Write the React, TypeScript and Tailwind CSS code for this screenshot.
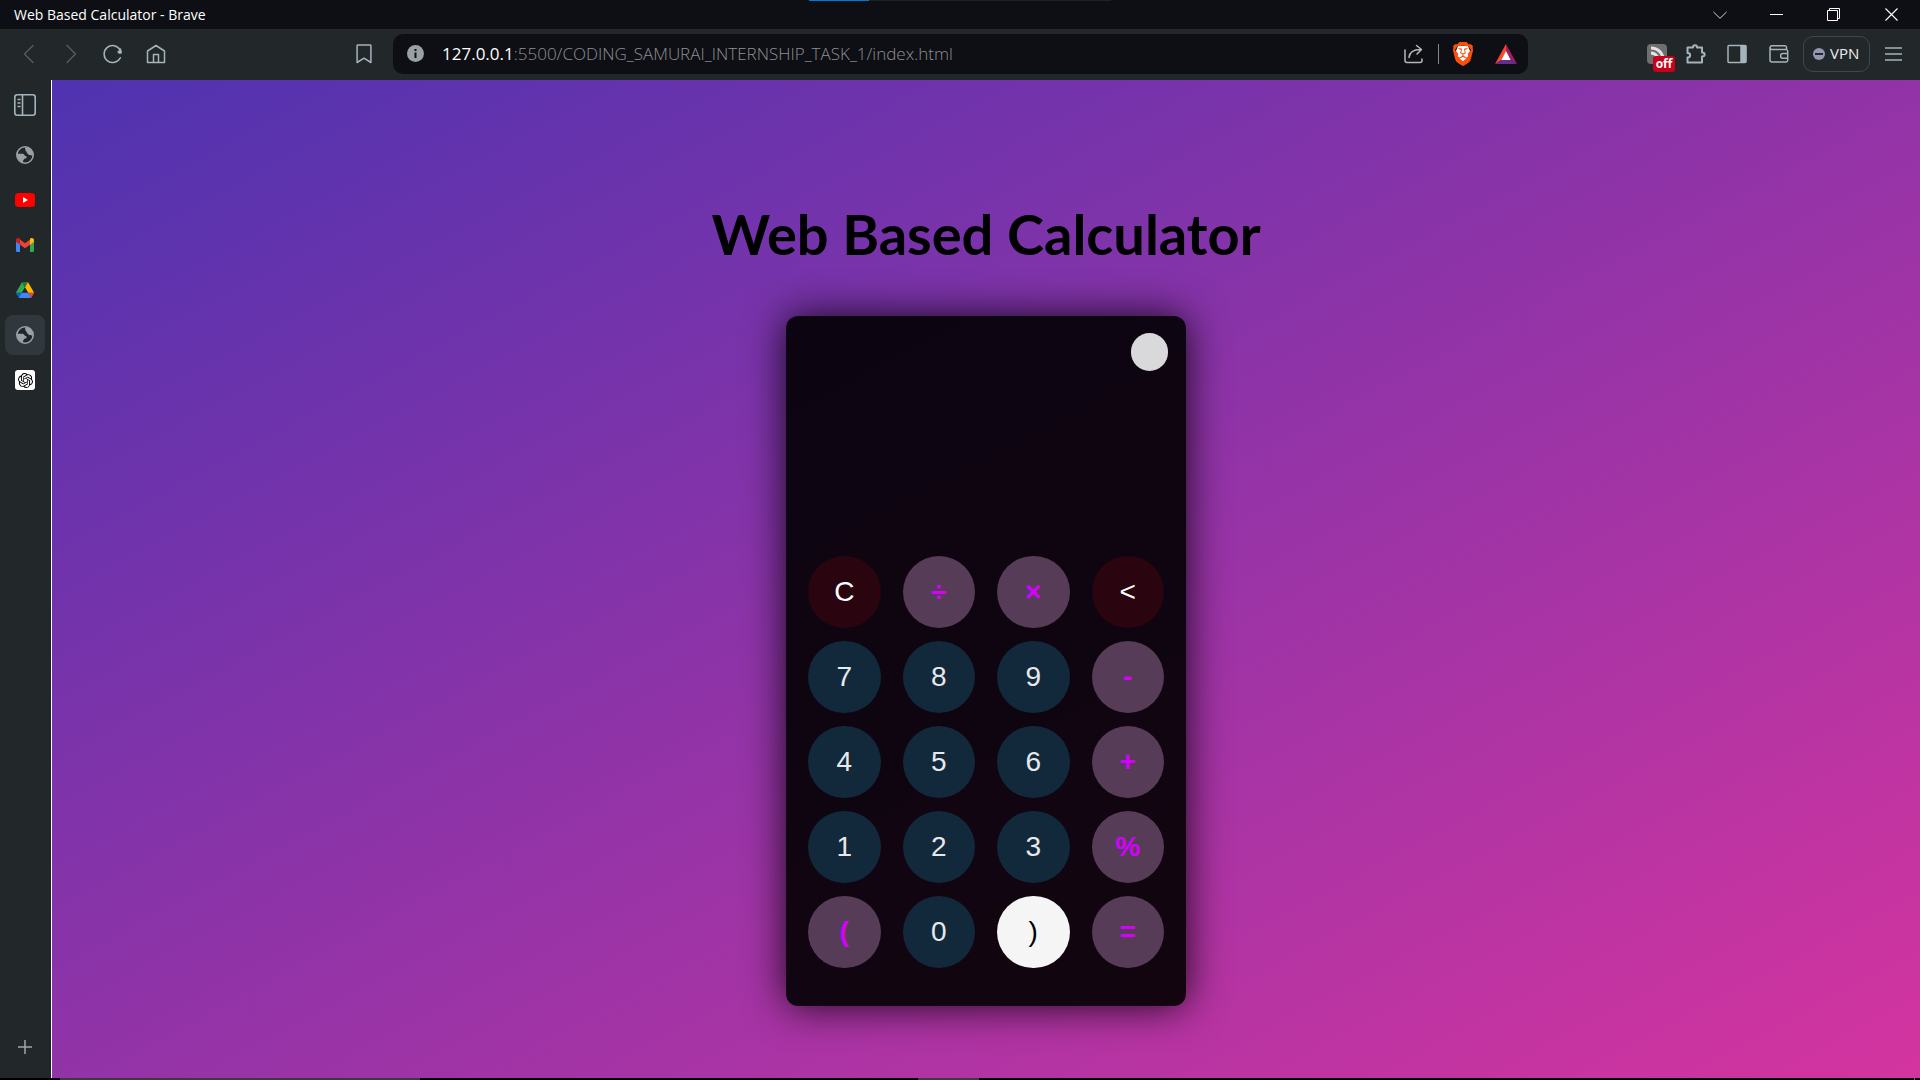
import type { ReactNode } from 'react';
import { SiBrave, SiOpenai } from 'react-icons/si';

type KeyKind = 'digit' | 'operator' | 'danger' | 'active';

const keyStyles: Record<KeyKind, string> = {
  digit: 'bg-[#12293c] text-[#e8e8ea]',
  operator: 'bg-[#573c58] font-bold text-[#d500ff]',
  danger: 'bg-[#2a050f] text-white',
  active: 'bg-[#f5f5f5] text-black',
};

const keys: { label: string; kind: KeyKind }[] = [
  { label: 'C', kind: 'danger' },
  { label: '÷', kind: 'operator' },
  { label: '×', kind: 'operator' },
  { label: '<', kind: 'danger' },
  { label: '7', kind: 'digit' },
  { label: '8', kind: 'digit' },
  { label: '9', kind: 'digit' },
  { label: '-', kind: 'operator' },
  { label: '4', kind: 'digit' },
  { label: '5', kind: 'digit' },
  { label: '6', kind: 'digit' },
  { label: '+', kind: 'operator' },
  { label: '1', kind: 'digit' },
  { label: '2', kind: 'digit' },
  { label: '3', kind: 'digit' },
  { label: '%', kind: 'operator' },
  { label: '(', kind: 'operator' },
  { label: '0', kind: 'digit' },
  { label: ')', kind: 'active' },
  { label: '=', kind: 'operator' },
];

function Stroke({ children, size = 20, width = 1.5 }: { children: ReactNode; size?: number; width?: number }) {
  return (
    <svg
      width={size}
      height={size}
      viewBox="0 0 20 20"
      fill="none"
      stroke="currentColor"
      strokeWidth={width}
      strokeLinecap="round"
      strokeLinejoin="round"
    >
      {children}
    </svg>
  );
}

function IconButton({ label, className = '', children }: { label: string; className?: string; children: ReactNode }) {
  return (
    <button type="button" aria-label={label} className={`flex shrink-0 items-center justify-center ${className}`}>
      {children}
    </button>
  );
}

function Globe() {
  return (
    <svg width="18" height="18" viewBox="0 0 18 18">
      <circle cx="9" cy="9" r="8.2" fill="#20272b" stroke="#9aa0a6" strokeWidth="1.6" />
      <path
        d="M9.400 1.200C8.600 2 9 2.800 9.700 3.300c-.8.700-.4 1.600.4 2 .9.400.5 1.500 1.300 2.100.9.600 1.300 1.700 2.500 1.700 1.100 0 1.900.8 3.100.5C17.300 4.800 13.800.9 9.400 1.200Z"
        fill="#9aa0a6"
      />
      <path
        d="M1 7.800h5c1.100 0 2.100.5 2.500 1.400.4.800 1.900.4 2.100 1.500.2 1.200-.7 1.900-1.600 1.900-1 0-.8 1-1.500 1.500-.6.400-.5 1.600-.2 2.500C3.600 15.800.8 12.700 1 7.800Z"
        fill="#9aa0a6"
      />
    </svg>
  );
}

function YouTube() {
  return (
    <svg width="20" height="14" viewBox="0 0 20 14">
      <rect width="20" height="14" rx="3.500" fill="#f00" />
      <path d="M8 4l5 3-5 3Z" fill="#fff" />
    </svg>
  );
}

function Gmail() {
  return (
    <svg width="18" height="14" viewBox="0 0 18 14">
      <path d="M0 3.500h4V14H1.300A1.300 1.300 0 0 1 0 12.700Z" fill="#4285f4" />
      <path d="M14 3.500h4v9.200a1.300 1.300 0 0 1-1.300 1.300H14Z" fill="#34a853" />
      <path d="M4 1.500 9 5.200l5-3.700v5.200L9 10.300 4 6.700Z" fill="#ea4335" />
      <path d="M0 2.200C0 .2 2.200-.6 3.600.5L4 .9v5.800L0 3.800Z" fill="#c5221f" />
      <path d="M18 2.200c0-2-2.200-2.800-3.600-1.700l-.4.4v5.800l4-2.900Z" fill="#fbbc04" />
    </svg>
  );
}

function Drive() {
  return (
    <svg width="18" height="16" viewBox="0 0 87.300 78">
      <path d="m6.600 66.850 3.850 6.650c.8 1.400 1.950 2.500 3.300 3.300l13.750-23.800h-27.500c0 1.550.4 3.100 1.200 4.500z" fill="#0066da" />
      <path d="m43.650 25-13.750-23.800c-1.350.8-2.500 1.900-3.300 3.300l-25.400 44a9.060 9.060 0 0 0-1.200 4.500h27.500z" fill="#34a853" />
      <path d="m73.550 76.800c1.350-.8 2.500-1.900 3.300-3.300l1.600-2.750 7.650-13.250c.8-1.400 1.200-2.950 1.200-4.500h-27.502l5.852 11.500z" fill="#ea4335" />
      <path d="m43.650 25 13.750-23.800c-1.350-.8-2.900-1.200-4.500-1.200h-18.500c-1.600 0-3.150.45-4.500 1.200z" fill="#188038" />
      <path d="m59.800 53h-32.300l-13.750 23.800c1.350.8 2.900 1.200 4.500 1.200h50.800c1.600 0 3.150-.45 4.500-1.200z" fill="#4285f4" />
      <path d="m73.400 26.500-12.700-22c-.8-1.400-1.950-2.500-3.300-3.300l-13.750 23.800 16.150 28h27.450c0-1.550-.4-3.100-1.200-4.500z" fill="#ffba00" />
    </svg>
  );
}

function Bat() {
  return (
    <svg width="22" height="20" viewBox="0 0 22 20">
      <path d="M11 0 0 20l6.500-4L11 7.500Z" fill="#ff4724" />
      <path d="M11 0l11 20-6.500-4L11 7.500Z" fill="#9e1f63" />
      <path d="M0 20h22l-6.500-4h-9Z" fill="#662d91" />
      <path d="M11 7 6.300 16h9.400Z" fill="#fff" />
    </svg>
  );
}

function TitleBar() {
  return (
    <header className="grid h-[29px] grid-cols-[1fr_302px_1fr] bg-[#0e0f14] text-white">
      <h2 className="self-center pl-[14px] text-[14px] leading-5">Web Based Calculator - Brave</h2>
      <div className="h-px bg-[#202122]">
        <div className="h-px w-[60px] bg-[#0078d7]" />
      </div>
      <div className="flex items-center justify-end">
        <IconButton label="Search tabs" className="h-7 w-[57px]">
          <svg width="14" height="8" viewBox="0 0 14 8" fill="none" stroke="#d0d0d2">
            <path d="M.5 1 7 7.300 13.500 1" />
          </svg>
        </IconButton>
        <IconButton label="Minimize" className="h-7 w-[57px]">
          <svg width="13" height="13" viewBox="0 0 13 13" stroke="currentColor">
            <path d="M0 6.500h13" />
          </svg>
        </IconButton>
        <IconButton label="Restore" className="h-7 w-[57px]">
          <svg width="13" height="13" viewBox="0 0 13 13" fill="none" stroke="currentColor">
            <path d="M.5 2.500h10v10H.5ZM2.500 2.500v-2h10v10h-2" />
          </svg>
        </IconButton>
        <IconButton label="Close" className="h-7 w-[58px]">
          <svg width="13" height="13" viewBox="0 0 13 13" stroke="currentColor" strokeWidth="1.100">
            <path d="M.5.5l12 12M12.500.5l-12 12" />
          </svg>
        </IconButton>
      </div>
    </header>
  );
}

function Toolbar() {
  return (
    <nav className="flex h-[51px] items-center bg-[#22272a] pb-0.5 text-[#a5b4bb]">
      <div className="flex w-[393px] items-center pr-[19px] pl-[7px]">
        <IconButton label="Back" className="h-9 w-[43px] text-[#545b5f]">
          <Stroke><path d="M14 1.500 5.500 10l8.500 8.500" /></Stroke>
        </IconButton>
        <IconButton label="Forward" className="h-9 w-[42px] text-[#545b5f]">
          <Stroke><path d="M6 1.500l8.500 8.500L6 18.500" /></Stroke>
        </IconButton>
        <IconButton label="Reload" className="h-9 w-[42px]">
          <Stroke>
            <path d="M17.300 13.700A8.500 8.500 0 1 1 17 5.800" />
            <circle cx="17" cy="8" r="2" fill="currentColor" stroke="none" />
            <path d="M17.500 5v3h-2.500" />
          </Stroke>
        </IconButton>
        <IconButton label="Home" className="h-9 w-[43px]">
          <Stroke>
            <path d="M1.500 7 10 1.500 18.500 7v11.500h-17Z M7.500 18.500v-8h5v8" />
          </Stroke>
        </IconButton>
        <IconButton label="Bookmark this page" className="ml-auto h-9 w-5">
          <Stroke><path d="M3.800 1h12.400a.7.7 0 0 1 .7.7V18.500L10 14.200l-6.900 4.300V1.700a.7.7 0 0 1 .7-.7Z" /></Stroke>
        </IconButton>
      </div>

      <div className="flex h-10 min-w-0 flex-1 items-center rounded-[10px] bg-[#0e0f14] pr-[11px] pl-[14px]">
        <IconButton label="Site information" className="h-8 w-[17px]">
          <svg width="17" height="17" viewBox="0 0 17 17">
            <circle cx="8.500" cy="8.500" r="8.500" fill="#9aa0a6" />
            <path d="M7.500 4h2v2h-2ZM7.500 7.500h2V13h-2Z" fill="#0e0f14" />
          </svg>
        </IconButton>
        <a href="#address" className="ml-[18px] min-w-0 flex-1 truncate text-[17px] leading-6 font-light text-[#8e8f92]">
          <span className="font-normal text-white">127.0.0.1</span>
          :5500/CODING_SAMURAI_INTERNSHIP_TASK_1/index.html
        </a>
        <IconButton label="Share this page" className="h-8 w-5 text-[#b5b6b8]">
          <Stroke>
            <path d="M1 6v10.500a2 2 0 0 0 2 2h13a2 2 0 0 0 2-2V15M5 13.500c.5-5 4-8 11.500-8M12.500 1.500l5 4-4.500 4.500" />
          </Stroke>
        </IconButton>
        <span className="mx-[14px] h-5 w-px bg-[#85868a]" />
        <IconButton label="Brave Shields" className="h-8 w-5">
          <svg width="20" height="24" viewBox="0 0 20 24">
            <path d="M5 4h10l2 5-2 7-5 4-5-4-2-7Z" fill="#fff" />
            <SiBrave x="-2" y="0" size={24} color="#fb4f0a" />
          </svg>
        </IconButton>
        <IconButton label="Brave Rewards" className="ml-[22px] h-8 w-[22px]"><Bat /></IconButton>
      </div>

      <div className="flex w-[392px] items-center justify-end pr-[18px]">
        <IconButton label="Feed extension, off" className="relative h-5 w-5">
          <svg width="20" height="20" viewBox="0 0 20 20">
            <rect width="20" height="20" rx="4" fill="#6f6f6f" />
            <path d="M4 4c7 0 12 5 12 12M4 9c4 0 7 3 7 7" fill="none" stroke="#e4e4e4" strokeWidth="3" />
          </svg>
          <span className="absolute top-3 left-[6px] h-4 w-[22px] rounded-[3px] bg-[#c8001a] text-center text-[12px] leading-4 font-bold text-white">
            off
          </span>
        </IconButton>
        <IconButton label="Extensions" className="ml-[19px] h-8 w-5">
          <Stroke width={2}>
            <path d="M1.500 3.500H7c0-3 4-3 4 0h5v5c3.500 0 3.500 4 0 4v6h-14.500v-5c3.500 0 3.500-4.500 0-4.500Z" />
          </Stroke>
        </IconButton>
        <IconButton label="Show sidebar" className="ml-[21px] h-8 w-5">
          <Stroke>
            <rect x="1" y="1.500" width="18" height="17" rx="1" />
            <path d="M14 2h4.500v16H14Z" fill="currentColor" />
          </Stroke>
        </IconButton>
        <IconButton label="Wallet" className="ml-[22px] h-8 w-5">
          <Stroke>
            <path d="M17.500 5.500V3.300a1.500 1.500 0 0 0-1.500-1.500H3a2 2 0 0 0-2 2V16a2 2 0 0 0 2 2h14a1.700 1.700 0 0 0 1.700-1.700V7.200A1.700 1.700 0 0 0 17 5.500H3a2 2 0 0 1-2-1.700M18.700 9.500h-5a2 2 0 0 0-2 2v.8a2 2 0 0 0 2 2h5" />
          </Stroke>
        </IconButton>
        <button
          type="button"
          className="ml-[14px] flex h-9 w-[67px] items-center gap-[5px] rounded-[10px] border border-[#3d484d] pl-[9px] text-[15px] text-[#ececf0]"
        >
          <span className="flex h-3 w-3 items-center justify-center rounded-full bg-[#9696b0]">
            <span className="h-0.5 w-2 bg-[#22272a]" />
          </span>
          VPN
        </button>
        <IconButton label="Menu" className="ml-[14px] h-8 w-[18px]">
          <svg width="17" height="14" viewBox="0 0 17 14" stroke="currentColor" strokeWidth="1.300">
            <path d="M0 1h17M0 7h17M0 13h17" />
          </svg>
        </IconButton>
      </div>
    </nav>
  );
}

function Sidebar() {
  return (
    <aside className="flex w-[51px] shrink-0 flex-col items-center gap-[5px] border-r border-[#1a2023] bg-[#22272a] pt-[5px]">
      <IconButton label="Collapse sidebar" className="mb-[5px] h-10 w-10 text-[#a5b4bb]">
        <svg width="22" height="22" viewBox="0 0 22 22" fill="none" stroke="currentColor" strokeWidth="1.600">
          <rect x=".8" y=".8" width="20.400" height="20.400" rx="2.500" />
          <path d="M8.500 1v20M3.500 5.500h3M3.500 9h3M3.500 12.500h3" />
        </svg>
      </IconButton>
      <IconButton label="Web page" className="h-10 w-10"><Globe /></IconButton>
      <IconButton label="YouTube" className="h-10 w-10"><YouTube /></IconButton>
      <IconButton label="Gmail" className="h-10 w-10"><Gmail /></IconButton>
      <IconButton label="Google Drive" className="h-10 w-10"><Drive /></IconButton>
      <IconButton label="Web Based Calculator" className="h-10 w-10 rounded-lg bg-[#30383d]"><Globe /></IconButton>
      <IconButton label="ChatGPT" className="h-10 w-10">
        <span className="flex h-5 w-5 items-center justify-center rounded-[3px] bg-white text-black">
          <SiOpenai size={15} />
        </span>
      </IconButton>
      <IconButton label="New tab" className="mt-auto mb-[11px] h-10 w-10 text-[#a3a7a8]">
        <svg width="14" height="14" viewBox="0 0 14 14" stroke="currentColor" strokeWidth="1.500">
          <path d="M7 0v14M0 7h14" />
        </svg>
      </IconButton>
    </aside>
  );
}

function Calculator() {
  return (
    <section
      aria-label="Calculator"
      className="flex w-[400px] flex-col rounded-xl bg-black/90 pt-[17px] pr-[18px] pb-[38px] pl-[22px] font-['Liberation_Sans',Arial,sans-serif] shadow-[0_0_40px_rgba(0,0,0,0.85)]"
    >
      <button
        type="button"
        aria-label="Toggle theme"
        className="h-[38px] w-[37px] self-end rounded-full bg-[#d9d9db]"
      />
      <input
        type="text"
        readOnly
        aria-label="Result"
        className="my-4 h-[153px] w-full bg-transparent text-right text-[40px] text-white outline-none"
      />
      <div className="mr-1 grid grid-cols-4 gap-x-[22px] gap-y-[13px]">
        {keys.map((key) => (
          <button
            key={key.label}
            type="button"
            className={`h-[72px] rounded-full text-[28px] leading-8 ${keyStyles[key.kind]}`}
          >
            {key.label}
          </button>
        ))}
      </div>
    </section>
  );
}

export default function App() {
  return (
    <div className="flex min-h-screen flex-col bg-black font-['Open_Sans','Noto_Sans',sans-serif]">
      <TitleBar />
      <Toolbar />
      <div className="flex flex-1">
        <Sidebar />
        <main className="flex flex-1 flex-col items-center border-l border-white bg-[linear-gradient(to_bottom_right,#4f33b0,#d4349f)] pt-[122px] pb-[72px]">
          <h1 className="mb-[50px] font-['Lato',sans-serif] text-[56px] leading-[64px] font-bold text-black">
            Web Based Calculator
          </h1>
          <Calculator />
        </main>
      </div>
      <footer className="flex h-0.5 bg-black pl-[60px]">
        <span className="w-[360px] bg-[#3b3b3b]" />
        <span className="ml-[498px] w-[61px] bg-[#3b3b3b]" />
        <span className="mr-[5px] ml-auto w-px bg-[#6b6b6b]" />
      </footer>
    </div>
  );
}
